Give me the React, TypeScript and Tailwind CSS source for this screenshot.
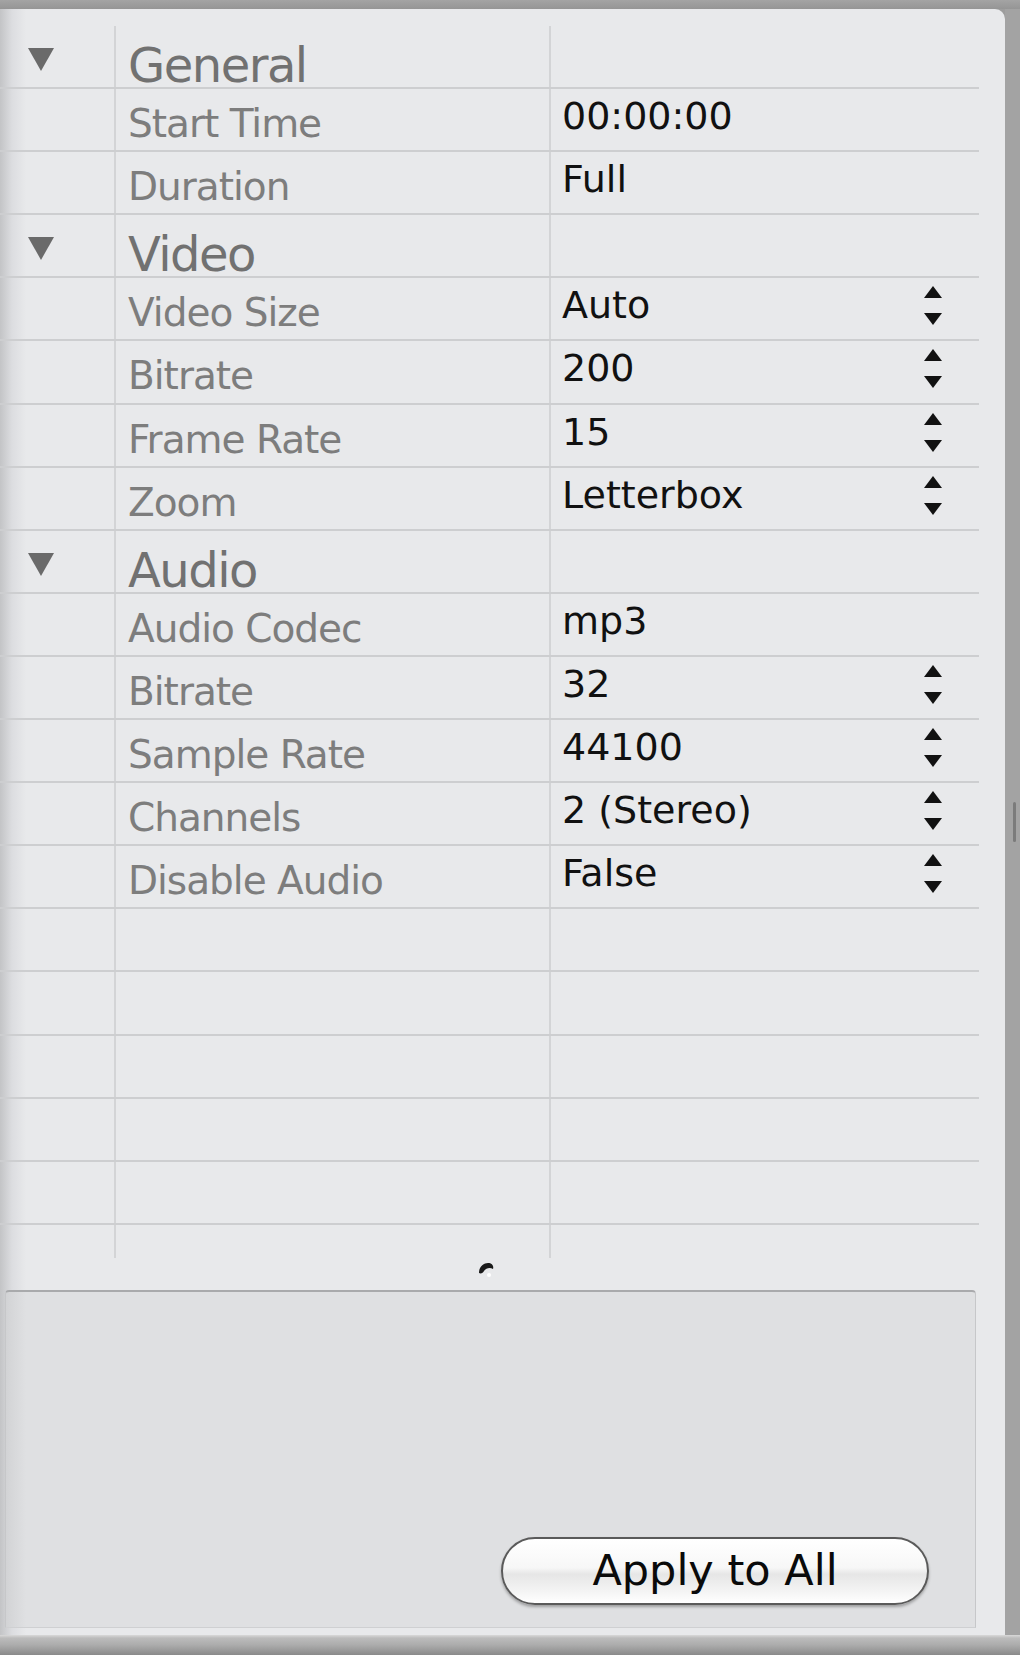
import React from "react";

type Row =
  | { kind: "group"; label: string }
  | { kind: "item"; label: string; value: string; stepper?: boolean }
  | { kind: "empty" };

const rows: Row[] = [
  { kind: "group", label: "General" },
  { kind: "item", label: "Start Time", value: "00:00:00" },
  { kind: "item", label: "Duration", value: "Full" },
  { kind: "group", label: "Video" },
  { kind: "item", label: "Video Size", value: "Auto", stepper: true },
  { kind: "item", label: "Bitrate", value: "200", stepper: true },
  { kind: "item", label: "Frame Rate", value: "15", stepper: true },
  { kind: "item", label: "Zoom", value: "Letterbox", stepper: true },
  { kind: "group", label: "Audio" },
  { kind: "item", label: "Audio Codec", value: "mp3" },
  { kind: "item", label: "Bitrate", value: "32", stepper: true },
  { kind: "item", label: "Sample Rate", value: "44100", stepper: true },
  { kind: "item", label: "Channels", value: "2 (Stereo)", stepper: true },
  { kind: "item", label: "Disable Audio", value: "False", stepper: true },
  { kind: "empty" },
  { kind: "empty" },
  { kind: "empty" },
  { kind: "empty" },
  { kind: "empty" },
];

function Disclosure() {
  return (
    <svg width="28" height="25" viewBox="0 0 28 25" className="block">
      <polygon points="1,1 27,1 14,24" fill="#6a6a6a" />
    </svg>
  );
}

function Stepper() {
  return (
    <svg width="18" height="40" viewBox="0 0 18 40" className="block">
      <polygon points="9,0 18,12 0,12" fill="#111" />
      <polygon points="0,27 18,27 9,39" fill="#111" />
    </svg>
  );
}

export default function App() {
  const font = { fontFamily: '"DejaVu Sans", Verdana, sans-serif' };
  return (
    <div
      className="w-[1020px] h-[1655px] flex flex-col overflow-hidden bg-[#9d9d9d]"
      style={font}
    >
      <div className="h-[9px] shrink-0 bg-[linear-gradient(to_bottom,#a4a4a4,#959595)]" />
      <div className="flex flex-1 min-h-0">
        <div className="flex-1 flex flex-col rounded-tr-[10px] bg-[linear-gradient(to_right,#c3c4c6_0px,#dcdde0_12px,#e8e9eb_26px)]">
          <div className="pt-[17px] w-[979px]">
            {rows.map((r, i) => (
              <div
                key={i}
                className="flex h-[63.1px] border-b-2 border-[#cdced0]"
              >
                <div className="w-[116px] shrink-0 border-r-2 border-[#d3d4d6] pl-[27px] pt-[21px]">
                  {r.kind === "group" && <Disclosure />}
                </div>
                <div className="w-[435px] shrink-0 border-r-2 border-[#d3d4d6] pl-[12px]">
                  {r.kind === "group" && (
                    <div className="pt-[15px] text-[48px] leading-none tracking-[-1.5px] text-[#717171]">
                      {r.label}
                    </div>
                  )}
                  {r.kind === "item" && (
                    <div className="pt-[15px] text-[39px] leading-none tracking-[-1px] text-[#7d7d7d] whitespace-nowrap">
                      {r.label}
                    </div>
                  )}
                </div>
                <div className="flex-1 flex items-start justify-between pl-[11px] pr-[37px]">
                  {r.kind === "item" && (
                    <>
                      <div className="pt-[8px] text-[38px] leading-none text-[#111111] whitespace-nowrap">
                        {r.value}
                      </div>
                      {r.stepper && (
                        <div className="pt-[8px]">
                          <Stepper />
                        </div>
                      )}
                    </>
                  )}
                </div>
              </div>
            ))}
            <div className="flex h-[33px]">
              <div className="w-[116px] shrink-0 border-r-2 border-[#d3d4d6]" />
              <div className="w-[435px] shrink-0 border-r-2 border-[#d3d4d6]" />
              <div className="flex-1" />
            </div>
          </div>
          <div className="h-[31px] pl-[477px] pt-[3px]">
            <svg width="18" height="16" viewBox="0 0 18 16" className="block">
              <path
                d="M2 12 C2 5 7 2 11 2 C15 2 17 5 16 8 C13 6 9 7 7 10 C6 12 4 13 2 12 Z"
                fill="#1a1a1a"
              />
              <circle cx="12" cy="14" r="2" fill="#ffffff" />
            </svg>
          </div>
          <div className="mt-auto ml-[5px] mr-[29px] mb-[7px] h-[338px] flex items-end justify-end pr-[46px] pb-[22px] rounded-t-[4px] border-t-2 border-[#a9aaac] border-l border-r border-b border-l-[#c6c7c9] border-r-[#c6c7c9] border-b-[#cfd0d2] bg-[linear-gradient(to_right,#d2d3d5_0px,#dfe0e2_20px)]">
            <button className="w-[428px] h-[68px] rounded-full border-2 border-[#5a5a5a] bg-[linear-gradient(to_bottom,#ffffff_0%,#f7f7f7_45%,#e6e6e6_55%,#f3f3f3_80%,#ffffff_100%)] shadow-[0_2px_3px_rgba(0,0,0,0.3)] text-[43px] leading-none text-[#0a0a0a] flex items-center justify-center pb-[2px]">
              Apply to All
            </button>
          </div>
        </div>
        <div className="w-[15px] shrink-0 flex items-center pl-[8px] bg-[#a3a3a3]">
          <div className="w-[3px] h-[40px] rounded-full bg-[#7b7b7b]" />
        </div>
      </div>
      <div className="h-[20px] shrink-0 bg-[linear-gradient(to_bottom,#d9d9d9_0px,#bcbcbc_3px,#acacac_10px,#8a8a8a_20px)]" />
    </div>
  );
}
